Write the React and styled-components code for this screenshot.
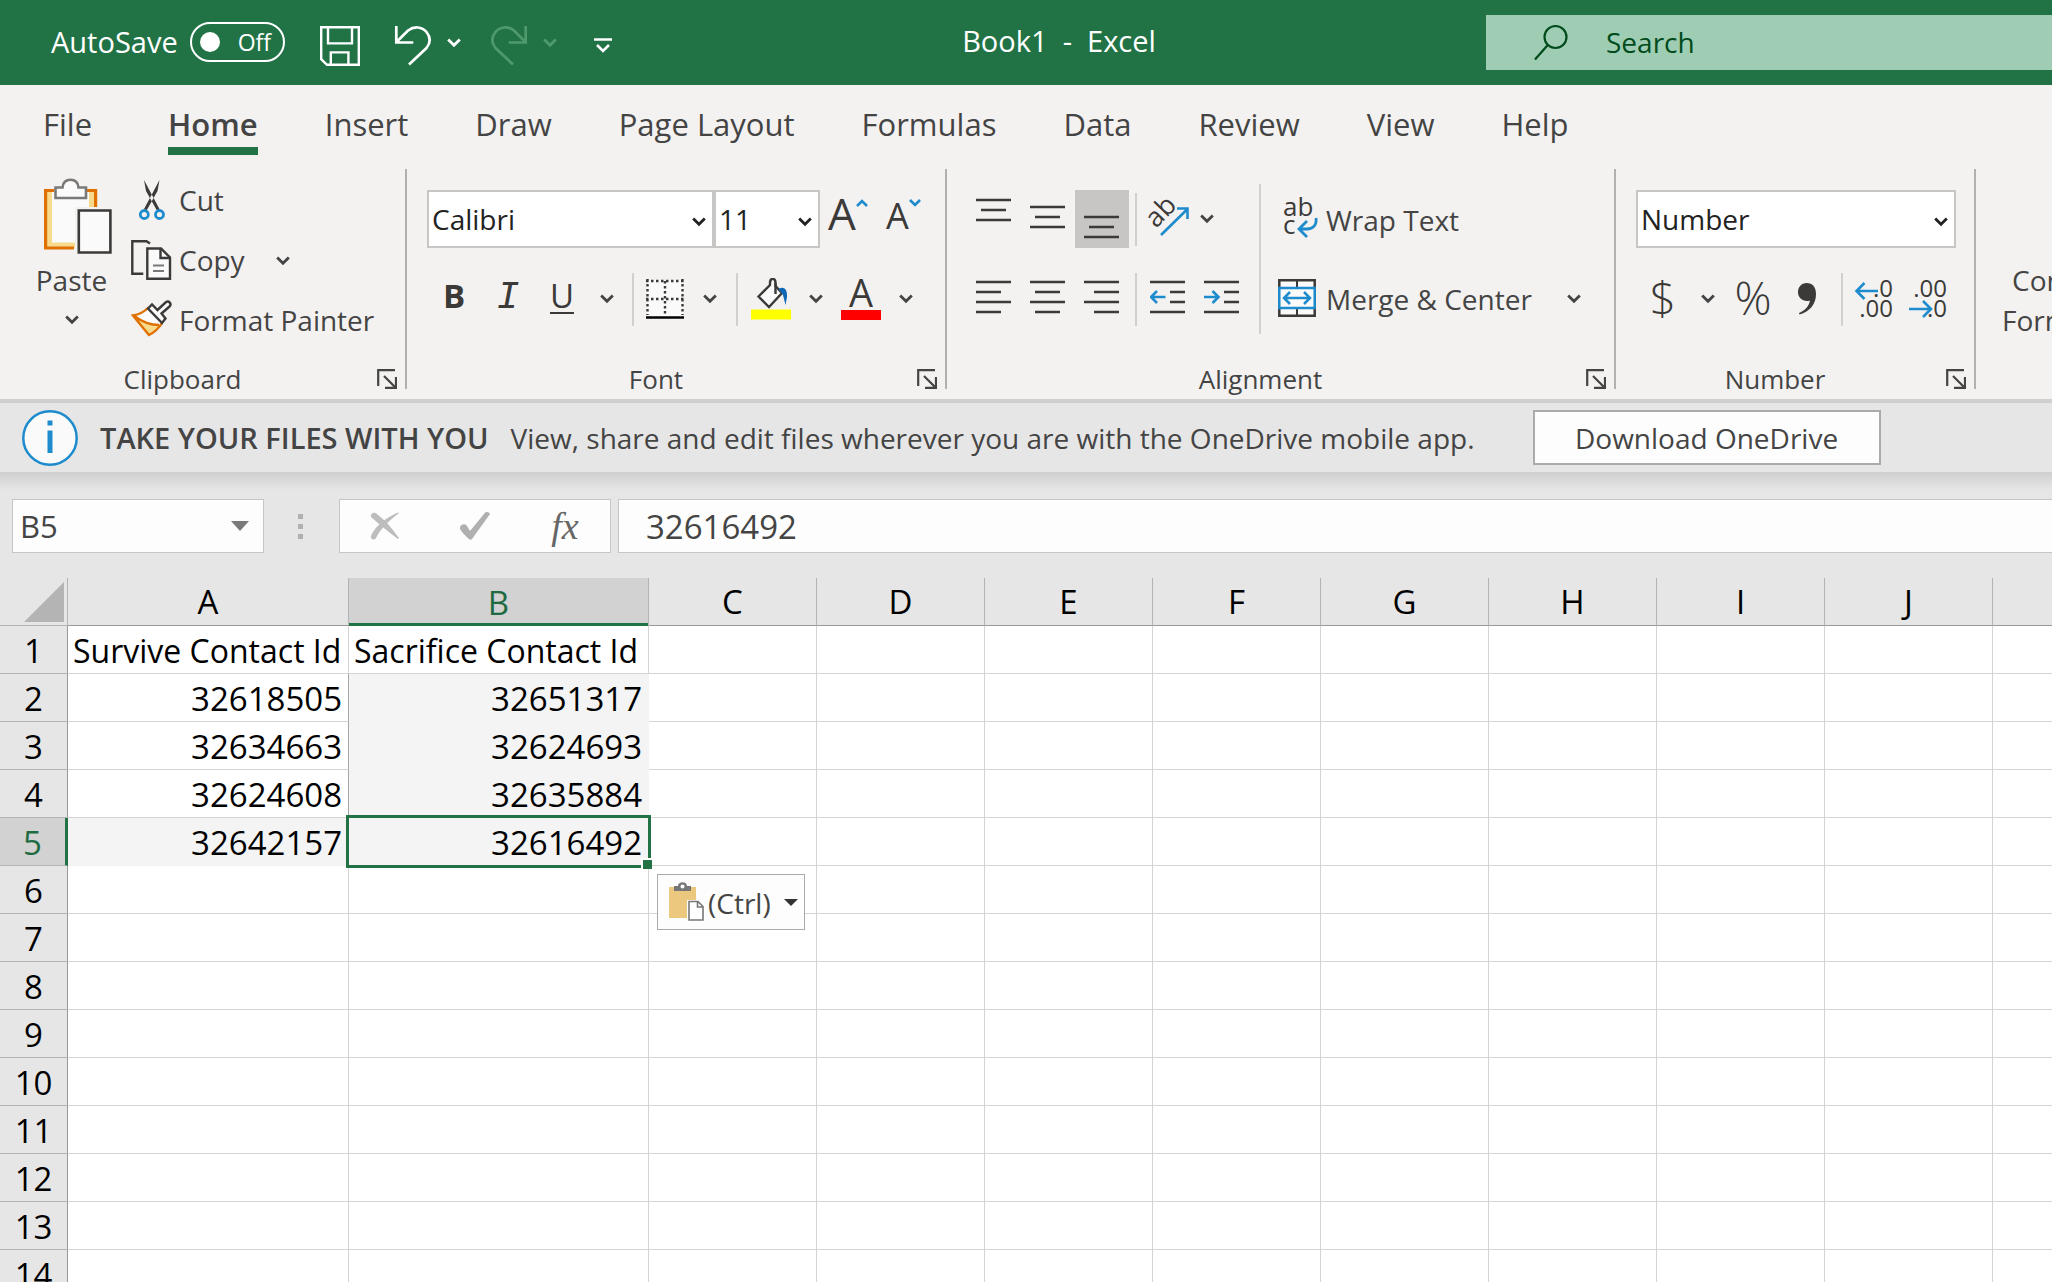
import React from "react";
import styled, { createGlobalStyle } from "styled-components";

const INK = "#3b3a39";
const BLUE = "#1e8bcd";

const TABS = [
  "File",
  "Home",
  "Insert",
  "Draw",
  "Page Layout",
  "Formulas",
  "Data",
  "Review",
  "View",
  "Help",
];

const COLUMNS = [
  { name: "A", width: 281 },
  { name: "B", width: 300 },
  { name: "C", width: 168 },
  { name: "D", width: 168 },
  { name: "E", width: 168 },
  { name: "F", width: 168 },
  { name: "G", width: 168 },
  { name: "H", width: 168 },
  { name: "I", width: 168 },
  { name: "J", width: 168 },
  { name: "K" },
];

const DATA = [
  ["Survive Contact Id", "Sacrifice Contact Id"],
  ["32618505", "32651317"],
  ["32634663", "32624693"],
  ["32624608", "32635884"],
  ["32642157", "32616492"],
];

const ROWS = Array.from({ length: 14 }, (_, i) => DATA[i] || []);

const Chevron = () => (
  <svg width="14" height="10" viewBox="0 0 14 10" fill="none">
    <path d="M1.2 1.5 7 7.3l5.8-5.8" stroke="currentColor" strokeWidth="2.8" />
  </svg>
);

const SaveIcon = () => (
  <svg width="40" height="40" viewBox="0 0 40 40" fill="none">
    <g stroke="#fff" strokeWidth="2.4">
      <path d="M1.2 1.2h37.6v37.6H7l-5.8-5.6z" />
      <path d="M8 2v15.4h24V2M10.800 38V26.400h17.600V38" />
    </g>
  </svg>
);

const UndoIcon = ({ flip }) => (
  <svg width="38" height="40" viewBox="0 0 38 40" fill="none">
    <path
      d="M2.300 0v16.500h17M2.500 16 14 4.500C20 0 28 .5 32.500 6c4 5 4 11 0 16L15 38.500"
      stroke="currentColor"
      strokeWidth="2.700"
      transform={flip ? "matrix(-1 0 0 1 38 0)" : undefined}
    />
  </svg>
);

const CustomizeIcon = () => (
  <svg width="18" height="16" viewBox="0 0 18 16" fill="none">
    <path d="M0 1.500h18M3 7l6 6 6-6" stroke="#fff" strokeWidth="2.600" />
  </svg>
);

const SearchIcon = () => (
  <svg width="34" height="38" viewBox="0 0 34 38" fill="none">
    <g stroke="#004b1c" strokeWidth="2.200">
      <circle cx="21.500" cy="13" r="11" />
      <path d="M13.800 21 1 35.500" />
    </g>
  </svg>
);

const PasteIcon = () => (
  <svg width="70" height="76" viewBox="0 0 70 76" fill="none">
    <path d="M1.500 12.500h51v58h-51z" fill="#fafafa" />
    <path d="M5.500 14v53H31M47.500 14v15" stroke="#f8da8c" strokeWidth="5" />
    <path d="M10 12.500H1.600V70H30M43 12.500h8.600V29" stroke="#e07000" strokeWidth="3.200" />
    <path
      d="M11.500 9.500h7C19 4.500 22 1.800 26.500 1.800S34 4.500 34.500 9.500h7.500v10.500H11.500z"
      fill="#fafafa"
      stroke="#7a7978"
      strokeWidth="2.600"
    />
    <path d="M31 29h38v47H31z" fill="#f3f2f1" />
    <path d="M34.800 32.500h31.600v42H34.800z" fill="#fafafa" stroke={INK} strokeWidth="2.600" />
  </svg>
);

const CutIcon = () => (
  <svg width="40" height="40" viewBox="0 0 40 40" fill="none">
    <path d="M12 0 28 30l-2.500 1.500L14 11zM27.500 0l-16 30 2.500 1.500L25.500 11z" fill={INK} />
    <circle cx="12.300" cy="34.500" r="4" stroke={BLUE} strokeWidth="2.800" />
    <circle cx="27.500" cy="34.500" r="4" stroke={BLUE} strokeWidth="2.800" />
  </svg>
);

const CopyIcon = () => (
  <svg width="42" height="40" viewBox="0 0 42 40" fill="none">
    <path d="M19 3.500 15.500 1.200H1.300v32.500h11" stroke={INK} strokeWidth="2.400" />
    <path d="M16.300 8.500H30l9 9v21.300H16.300z" fill="#fafafa" stroke={INK} strokeWidth="2.400" />
    <path d="M29.500 8.500v9.500H39" stroke={INK} strokeWidth="2.400" />
    <path d="M22 25.500h11M22 31h11" stroke="#7a7978" strokeWidth="2.200" />
  </svg>
);

const PainterIcon = () => (
  <svg width="42" height="40" viewBox="0 2 42 40" fill="none">
    <path d="M2 17.500c7-1 12-4 15.500-8L32 24c-3 6-8 10-14 13z" fill="#fafafa" />
    <path d="M4 19.500c8 6 16 8 25 8-3 4-7 7-11 9z" fill="#f8da8c" />
    <path
      d="M17.500 9.500c-4 4-9 7-15.500 8C8 25 13 31 18 37c6-3 10-7 13-12M4 18.500c8 6 16 8.500 24 8.500"
      stroke="#e07000"
      strokeWidth="2.400"
    />
    <path
      d="m17 10.500 4-4 5.500 5.500 8-7.500c3.500-2.500 6.500 1.500 4 4L30.500 15.500l4 5L31 25z"
      fill="#fafafa"
      stroke={INK}
      strokeWidth="2.400"
    />
  </svg>
);

const LauncherIcon = () => (
  <svg width="20" height="20" viewBox="0 0 20 20" fill="none" stroke="#444" strokeWidth="2.200">
    <path d="M1.200 17V1.200H18M7 7l11 11M19 8v10.800H8" />
  </svg>
);

const GrowCaret = () => (
  <svg width="12" height="8" viewBox="0 0 12 8" fill="none">
    <path d="m1 7 5-5 5 5" stroke={BLUE} strokeWidth="2.600" />
  </svg>
);

const ShrinkCaret = () => (
  <svg width="12" height="8" viewBox="0 0 12 8" fill="none">
    <path d="m1 1 5 5 5-5" stroke={BLUE} strokeWidth="2.600" />
  </svg>
);

const BordersIcon = () => (
  <svg width="38" height="40" viewBox="0 0 38 40" fill="none">
    <path d="M1 1h36v37H1z" fill="#fafafa" />
    <path
      d="M0 2h38M1.500 0v36M36.500 0v36M19 2v34M0 20h38"
      stroke={INK}
      strokeWidth="2.400"
      strokeDasharray="2.500 2.500"
    />
    <path d="M0 38.500h38" stroke="#000" strokeWidth="2.600" />
  </svg>
);

const FillIcon = () => (
  <svg width="40" height="42" viewBox="0 0 40 42" fill="none">
    <path
      d="m7.500 18.500 11.500-11.500V5c0-5.500 5.500-5.500 5.500 0v3L31 15 18 29z"
      fill="#fafafa"
      stroke={INK}
      strokeWidth="2.400"
    />
    <path d="M24.500 5v11" stroke={INK} strokeWidth="2.400" />
    <path d="M27.500 11c6-3.500 9 1 8.500 8l-1.500 8L32 17z" fill="#0f67b5" />
    <path d="M0 31.500h40v10H0z" fill="#ff0" />
  </svg>
);

const LINE_PATHS = {
  top: "M0 8h35M5 18h25M0 28h35",
  middle: "M0 15h35M5 25h25M0 35h35",
  bottom: "M0 25h35M5 35h25M0 45h35",
  left: "M0 10h35M0 20h25M0 30h35M0 40h25",
  center: "M0 10h35M5 20h25M0 30h35M5 40h25",
  right: "M0 10h35M10 20h25M0 30h35M10 40h25",
  indent: "M0 10h35M20 20h15M20 30h15M0 40h35",
};

const LinesIcon = ({ kind, arrow }) => (
  <svg width="36" height="54" viewBox="0 0 36 54" fill="none" strokeWidth="2.600">
    <path d={LINE_PATHS[kind]} stroke={INK} />
    {arrow && <path d={arrow} stroke={BLUE} />}
  </svg>
);

const OrientationIcon = () => (
  <GlyphSvg width="44" height="44" viewBox="0 0 44 44" fill="none">
    <text
      x="10"
      y="32"
      transform="rotate(-46 10 32)"
      fontSize="27"
      fill={INK}
    >
      ab
    </text>
    <path d="M15 38 41 12.500M31 11.500h10.500V22" stroke={BLUE} strokeWidth="2.600" />
  </GlyphSvg>
);

const WrapIcon = () => (
  <GlyphSvg width="38" height="42" viewBox="0 0 38 42" fill="none">
    <text fontSize="26" fill={INK}>
      <tspan x="5" y="18">ab</tspan>
      <tspan x="5" y="36">c</tspan>
    </text>
    <path d="M38 20c1 7-3 11-9 11h-7M29 23l-8 8 8 8" stroke={BLUE} strokeWidth="2.800" />
  </GlyphSvg>
);

const MergeIcon = () => (
  <svg width="38" height="38" viewBox="0 0 38 38" fill="none">
    <path d="M1.300 1.300h35.400v35.400H1.300z" fill="#fafafa" stroke={INK} strokeWidth="2.500" />
    <path d="M19 2v7M19 29v8" stroke={INK} strokeWidth="2" />
    <path d="M1.300 9h35.400v20H1.300z" fill="#fafafa" stroke={BLUE} strokeWidth="2.500" />
    <path d="M6 19h26M12 13l-6 6 6 6M26 13l6 6-6 6" stroke={BLUE} strokeWidth="2.500" />
  </svg>
);

const CommaIcon = () => (
  <svg width="20" height="32" viewBox="0 0 20 32">
    <path
      d="M9.500 0C16 0 19 4.500 19 11c0 10-6 17.500-16.500 20.500l-.5-1.500c6-2.500 10-7 11-12.500C7 19.500 1 15.500 1 9 1 4 4.500 0 9.500 0z"
      fill={INK}
    />
  </svg>
);

const DecimalIcon = ({ top, bottom, arrow }) => (
  <GlyphSvg width="38" height="40" viewBox="0 0 38 40" fill="none">
    <text fontSize="24" fill={INK} textAnchor="end">
      <tspan x="38" y="18">{top}</tspan>
      <tspan x="38" y="38">{bottom}</tspan>
    </text>
    <path d={arrow} stroke={BLUE} strokeWidth="2.600" />
  </GlyphSvg>
);

const InfoIcon = () => (
  <svg width="56" height="56" viewBox="0 0 56 56" fill="none">
    <circle cx="28" cy="28" r="26.700" fill="#fafafa" stroke={BLUE} strokeWidth="2.500" />
    <path d="M28 10.500v5M28 20.500V43" stroke={BLUE} strokeWidth="5" />
  </svg>
);

const CancelIcon = () => (
  <svg width="30" height="28" viewBox="0 0 30 28" fill="none">
    <path d="M1 5C0 2 4-1 7 2c8 6 15 14 22 24l-1 1C20 21 10 13 1 5z" fill="#bdbdbd" />
    <path d="M29 1C20 8 11 16 6 26 4 29 0 27 1 24 5 14 17 5 28 .5z" fill="#bdbdbd" />
  </svg>
);

const EnterIcon = () => (
  <svg width="32" height="28" viewBox="0 0 32 28" fill="none">
    <path d="M1 15c1-3 5-4 7-1l3 5L25 2c2-3 5-2 6 0L13 27c-1 1-2 1-3 0C6 24 3 20 1 17z" fill="#b0b0b0" />
  </svg>
);

const DownTriangle = () => (
  <svg width="18" height="10" viewBox="0 0 18 10">
    <path d="M0 0h18L9 10z" fill="#7a7a7a" />
  </svg>
);

const PasteOptionsIcon = () => (
  <svg width="36" height="40" viewBox="0 0 36 40" fill="none">
    <path d="M0 5h27v31H0z" fill="#ecc87f" />
    <path d="M5 9V4h4c0-5 9-5 9 0h4v5z" fill="#777" />
    <circle cx="13.500" cy="4.500" r="2" fill="#fff" />
    <path d="M18 18h18v22H18z" fill="#fff" />
    <path d="M20 19.500h9l5 5V38H20zM28.500 19.500v5.500H34" stroke="#777" strokeWidth="1.600" />
  </svg>
);

const App = () => {
  const btn = (label, icon) => (
    <ToolButton aria-label={label}>{icon}</ToolButton>
  );

  return (
    <Page>
      <GlobalStyle />
      <TitleBar>
        <QuickAccess>
          <BarText>AutoSave</BarText>
          <Toggle aria-label="AutoSave off">Off</Toggle>
          <QuickButton aria-label="Save">
            <SaveIcon />
          </QuickButton>
          <QuickPair aria-label="Undo">
            <UndoIcon />
            <Chevron />
          </QuickPair>
          <QuickPair aria-label="Redo" disabled>
            <UndoIcon flip />
            <Chevron />
          </QuickPair>
          <QuickButton aria-label="Customize">
            <CustomizeIcon />
          </QuickButton>
        </QuickAccess>
        <DocumentName>Book1&nbsp; -&nbsp; Excel</DocumentName>
        <SearchBox>
          <SearchIcon />
          <input type="search" placeholder="Search" aria-label="Search" />
        </SearchBox>
      </TitleBar>

      <TabBar>
        {TABS.map((tab) => (
          <Tab key={tab} href="#" $active={tab === "Home"}>
            {tab}
          </Tab>
        ))}
      </TabBar>

      <Ribbon>
        <Group $width={407}>
          <ClipboardBody>
            <PasteButton>
              <PasteIcon />
              <span>Paste</span>
              <Chevron />
            </PasteButton>
            <ClipboardList>
              <LabelButton>
                <CutIcon />
                <span>Cut</span>
              </LabelButton>
              <LabelButton>
                <CopyIcon />
                <span>Copy</span>
                <Drop as="span">
                  <Chevron />
                </Drop>
              </LabelButton>
              <LabelButton>
                <PainterIcon />
                <span>Format Painter</span>
              </LabelButton>
            </ClipboardList>
          </ClipboardBody>
          <GroupFooter name="Clipboard" />
        </Group>

        <Group $width={540}>
          <Tools>
            <ToolRow>
              <ComboBox label="Font name" value="Calibri" width={287} />
              <ComboBox label="Font size" value="11" width={106} />
              <SizeButton aria-label="Increase font size" $size={44} $leading={46}>
                A<GrowCaret />
              </SizeButton>
              <SizeButton aria-label="Decrease font size" $size={36} $leading={52}>
                A<ShrinkCaret />
              </SizeButton>
            </ToolRow>
            <ToolRow>
              <BoldButton>B</BoldButton>
              <ItalicButton>I</ItalicButton>
              <UnderlineButton>
                <span>U</span>
              </UnderlineButton>
              <Drop aria-label="Underline options">
                <Chevron />
              </Drop>
              <Divider />
              {btn("Borders", <BordersIcon />)}
              <Drop aria-label="Border options">
                <Chevron />
              </Drop>
              <Divider $wide />
              {btn("Fill color", <FillIcon />)}
              <Drop aria-label="Fill options">
                <Chevron />
              </Drop>
              <FontColorButton aria-label="Font color">
                <span>A</span>
              </FontColorButton>
              <Drop aria-label="Font color options">
                <Chevron />
              </Drop>
            </ToolRow>
          </Tools>
          <GroupFooter name="Font" />
        </Group>

        <Group $width={669}>
          <AlignmentBody>
            <div>
              <ToolRow>
                {btn("Top align", <LinesIcon kind="top" />)}
                {btn("Middle align", <LinesIcon kind="middle" />)}
                <ToolButton aria-label="Bottom align" aria-pressed="true">
                  <LinesIcon kind="bottom" />
                </ToolButton>
                <Divider $tight />
                {btn("Orientation", <OrientationIcon />)}
                <Drop aria-label="Orientation options" $narrow>
                  <Chevron />
                </Drop>
              </ToolRow>
              <ToolRow>
                {btn("Align left", <LinesIcon kind="left" />)}
                {btn("Center", <LinesIcon kind="center" />)}
                {btn("Align right", <LinesIcon kind="right" />)}
                <Divider $tight />
                {btn(
                  "Decrease indent",
                  <LinesIcon kind="indent" arrow="M1 25h14.500M7 19l-6 6 6 6" />
                )}
                {btn(
                  "Increase indent",
                  <LinesIcon kind="indent" arrow="M0 25h14.500M8.500 19l6 6-6 6" />
                )}
              </ToolRow>
            </div>
            <WrapColumn>
              <LabelButton>
                <WrapIcon />
                <span>Wrap Text</span>
              </LabelButton>
              <LabelButton>
                <MergeIcon />
                <span>Merge &amp; Center</span>
                <Drop as="span">
                  <Chevron />
                </Drop>
              </LabelButton>
            </WrapColumn>
          </AlignmentBody>
          <GroupFooter name="Alignment" />
        </Group>

        <Group $width={360}>
          <Tools>
            <ToolRow>
              <ComboBox label="Number format" value="Number" width={320} />
            </ToolRow>
            <ToolRow>
              <GlyphButton>$</GlyphButton>
              <Drop aria-label="Currency options">
                <Chevron />
              </Drop>
              <GlyphButton>%</GlyphButton>
              {btn("Comma style", <CommaIcon />)}
              <Divider />
              {btn(
                "Increase decimal",
                <DecimalIcon top=".0" bottom=".00" arrow="M23 12H2M9.500 4 1.500 12l8 8" />
              )}
              {btn(
                "Decrease decimal",
                <DecimalIcon top=".00" bottom=".0" arrow="M0 30h21M14 22l8 8-8 8" />
              )}
            </ToolRow>
          </Tools>
          <GroupFooter name="Number" />
        </Group>

        <StylesGroup>
          <ConditionalButton>
            <span>Conditional</span>
            <span>Formatting</span>
          </ConditionalButton>
        </StylesGroup>
      </Ribbon>

      <MessageBar>
        <InfoIcon />
        <strong>TAKE YOUR FILES WITH YOU</strong>
        <p>View, share and edit files wherever you are with the OneDrive mobile app.</p>
        <DownloadButton>Download OneDrive</DownloadButton>
      </MessageBar>

      <FormulaBar>
        <NameBox>
          <input aria-label="Name box" defaultValue="B5" />
          <button aria-label="Name list">
            <DownTriangle />
          </button>
        </NameBox>
        <Dots>
          <i />
          <i />
          <i />
        </Dots>
        <FormulaActions>
          <button aria-label="Cancel">
            <CancelIcon />
          </button>
          <button aria-label="Enter">
            <EnterIcon />
          </button>
          <button aria-label="Insert function">
            <Fx>fx</Fx>
          </button>
        </FormulaActions>
        <FormulaInput aria-label="Formula" defaultValue="32616492" />
      </FormulaBar>

      <SheetArea>
        <Sheet>
          <colgroup>
            <Col $width={68} />
            {COLUMNS.map((col) => (
              <Col key={col.name} $width={col.width} />
            ))}
          </colgroup>
          <thead>
            <tr>
              <Corner>
                <svg width="40" height="40" viewBox="0 0 40 40">
                  <path d="M40 0v40H0z" fill="#b4b4b4" />
                </svg>
              </Corner>
              {COLUMNS.map((col) => (
                <ColumnHead key={col.name} scope="col" $active={col.name === "B"}>
                  {col.name}
                </ColumnHead>
              ))}
            </tr>
          </thead>
          <tbody>
            {ROWS.map((row, r) => (
              <tr key={r}>
                <RowHead scope="row" $active={r === 4}>
                  {r + 1}
                </RowHead>
                {COLUMNS.map((col, c) => {
                  const active = r === 4 && c === 1;
                  const shaded = (c === 1 && r > 0 && r < 4) || (c === 0 && r === 4);
                  return (
                    <Cell
                      key={col.name}
                      $number={r > 0}
                      $active={active}
                      $shaded={shaded}
                      $edge={c === 0 && r > 0 && r < 4}
                    >
                      {row[c]}
                      {active && (
                        <>
                          <Selection />
                          <PasteOptions>
                            <PasteOptionsIcon />
                            <span>(Ctrl)</span>
                            <svg width="14" height="7" viewBox="0 0 14 7">
                              <path d="M0 0h14L7 7z" fill="#333" />
                            </svg>
                          </PasteOptions>
                        </>
                      )}
                    </Cell>
                  );
                })}
              </tr>
            ))}
          </tbody>
        </Sheet>
      </SheetArea>
    </Page>
  );
};

const GroupFooter = ({ name }) => (
  <Footer>
    <span>{name}</span>
    <button aria-label={`${name} settings`}>
      <LauncherIcon />
    </button>
  </Footer>
);

const ComboBox = ({ label, value, width }) => (
  <Combo $width={width}>
    <select aria-label={label} defaultValue={value}>
      <option>{value}</option>
    </select>
    <Chevron />
  </Combo>
);

const GlobalStyle = createGlobalStyle`
  *, *::before, *::after {
    box-sizing: border-box;
  }

  body {
    margin: 0;
    font-family: "Open Sans", "Noto Sans", sans-serif;
    color: #444;
    background: #fff;
  }

  button, input, select {
    font: inherit;
    color: inherit;
    border: 0;
    padding: 0;
    margin: 0;
    background: none;
    border-radius: 0;
    outline: none;
  }

  svg {
    display: block;
    flex: none;
  }
`;

const Page = styled.div`
  height: 100vh;
  display: flex;
  flex-direction: column;
  overflow: hidden;
  font-size: 28px;
`;

// Icons with letters in them, which may reach past the icon's box
const GlyphSvg = styled.svg`
  overflow: visible;
  font-family: "Open Sans", sans-serif;
`;

const TitleBar = styled.header`
  flex: none;
  height: 85px;
  display: grid;
  grid-template-columns: 640px 1fr 566px;
  align-items: center;
  background: #217346;
  color: #fff;
`;

const QuickAccess = styled.div`
  display: flex;
  align-items: center;
  padding-left: 51px;
`;

const BarText = styled.span`
  padding-bottom: 2px;
  font-size: 29px;
`;

const Toggle = styled.button`
  display: flex;
  align-items: center;
  gap: 18px;
  width: 95px;
  height: 40px;
  margin: 0 35px 2px 12px;
  padding-left: 8px;
  border: 2px solid #fff;
  border-radius: 20px;
  font-size: 23px;

  &::before {
    content: "";
    width: 20px;
    height: 20px;
    border-radius: 50%;
    background: #fff;
  }
`;

const QuickButton = styled.button`
  margin-top: 6px;
`;

const QuickPair = styled.button`
  display: flex;
  align-items: center;
  gap: 15px;
  margin: 6px 0 0 34px;
  color: #fff;

  & + & {
    margin-left: 29px;
  }

  &:disabled {
    color: #4f9a6c;
  }

  svg:last-child {
    margin-bottom: 6px;
  }

  & + ${QuickButton} {
    margin-left: 37px;
  }
`;

const DocumentName = styled(BarText)`
  justify-self: center;
  padding: 0 8px 4px 0;
`;

const SearchBox = styled.label`
  height: 55px;
  display: flex;
  align-items: center;
  gap: 38px;
  padding-left: 48px;
  background: #9fcdb3;

  input {
    flex: 1;
    min-width: 0;
    padding-bottom: 2px;
    color: #004b1c;
  }

  input::placeholder {
    color: #004b1c;
    opacity: 1;
  }
`;

const TabBar = styled.nav`
  flex: none;
  height: 75px;
  display: flex;
  gap: 67px;
  padding: 15px 0 5px 43px;
  background: #f3f2f1;
`;

const Tab = styled.a`
  height: 55px;
  line-height: 49px;
  font-size: 31px;
  font-weight: ${(p) => (p.$active ? 600 : 400)};
  color: #444;
  text-decoration: none;
  white-space: nowrap;
  border-bottom: 8px solid ${(p) => (p.$active ? "#217346" : "transparent")};

  &:first-child {
    padding-right: 9px;
  }
`;

const Ribbon = styled.section`
  flex: none;
  height: 243px;
  display: flex;
  overflow: hidden;
  background: #f3f2f1;
  border-bottom: 4px solid #cfcfcf;
`;

const Group = styled.div`
  position: relative;
  flex: none;
  width: ${(p) => p.$width}px;
  display: flex;
  flex-direction: column;
  justify-content: space-between;

  &::after {
    content: "";
    position: absolute;
    right: 0;
    top: 9px;
    bottom: 10px;
    width: 2px;
    background: #b1b0af;
  }
`;

const Footer = styled.div`
  display: grid;
  grid-template-columns: 1fr 42px;
  align-items: center;
  height: 40px;
  font-size: 26px;
  text-align: center;

  button {
    display: flex;
    justify-content: center;
    padding-left: 2px;
  }
`;

const ClipboardBody = styled.div`
  display: flex;
  height: 190px;
  padding-top: 10px;
`;

const PasteButton = styled.button`
  display: flex;
  flex-direction: column;
  align-items: center;
  width: 87px;
  margin-left: 28px;
  padding-top: 8px;

  span {
    margin: 6px 0 15px;
    line-height: 40px;
  }

  svg:first-child {
    margin-left: 14px;
  }
`;

const ClipboardList = styled.div`
  padding-left: 16px;

  svg:first-child {
    width: 42px;
  }
`;

const LabelButton = styled.button`
  display: flex;
  align-items: center;
  gap: 6px;
  height: 60px;
  white-space: nowrap;
`;

const Drop = styled.button`
  display: flex;
  justify-content: center;
  width: ${(p) => (p.$narrow ? 24 : 36)}px;

  ${LabelButton} & {
    margin-left: 14px;
    padding-top: 2px;
  }
`;

const Tools = styled.div`
  padding: 19px 0 0 20px;
`;

const ToolRow = styled.div`
  display: flex;
  align-items: center;
  height: 80px;
`;

const ToolButton = styled.button`
  display: flex;
  align-items: center;
  justify-content: center;
  width: 54px;
  height: 58px;

  &[aria-pressed="true"] {
    background: #c8c6c4;
  }
`;

const BoldButton = styled(ToolButton)`
  padding-bottom: 8px;
  font-size: 33px;
  font-weight: 700;
  color: ${INK};
`;

const ItalicButton = styled(ToolButton)`
  padding-bottom: 4px;
  font-family: "Liberation Mono", monospace;
  font-size: 38px;
  font-style: italic;
  color: ${INK};
`;

const UnderlineButton = styled(ToolButton)`
  padding-bottom: 4px;
  font-size: 33px;
  color: ${INK};

  span {
    line-height: 32px;
    border-bottom: 2px solid ${INK};
  }
`;

const GlyphButton = styled(ToolButton)`
  padding-bottom: 4px;
  font-size: 46px;
  font-weight: 300;
  color: ${INK};
`;

const FontColorButton = styled(ToolButton)`
  span {
    width: 40px;
    height: 42px;
    line-height: 28px;
    font-size: 38px;
    color: ${INK};
    border-bottom: 10px solid #f00;
  }
`;

const SizeButton = styled.button`
  display: flex;
  align-items: flex-start;
  flex: none;
  width: 58px;
  height: 58px;
  padding-left: 8px;
  font-size: ${(p) => p.$size}px;
  line-height: ${(p) => p.$leading}px;
  color: ${INK};

  svg {
    margin-top: 9px;
  }
`;

const Divider = styled.span`
  width: 2px;
  height: 53px;
  margin: ${(p) => (p.$wide ? "0 6px 0 8px" : p.$tight ? "0 4px 0 6px" : "0 4px 0 7px")};
  background: #d2d0ce;
`;

const Combo = styled.div`
  position: relative;
  flex: none;
  width: ${(p) => p.$width}px;
  height: 58px;
  background: #fff;
  border: 2px solid #c8c6c4;

  select {
    appearance: none;
    width: 100%;
    height: 100%;
    padding-left: 3px;
    color: #222;
  }

  svg {
    position: absolute;
    right: 6px;
    top: 25px;
    color: #222;
    pointer-events: none;
  }
`;

const AlignmentBody = styled.div`
  display: grid;
  grid-template-columns: 292px 1fr;
  padding: 19px 0 0 20px;
`;

const WrapColumn = styled.div`
  height: 150px;
  margin-top: 5px;
  padding-left: 17px;
  border-left: 2px solid #d2d0ce;

  ${LabelButton} {
    height: 70px;
    gap: 10px;
  }

  ${LabelButton} > span {
    padding-top: 2px;
  }

  ${LabelButton} + ${LabelButton} {
    height: 88px;
  }
`;

const StylesGroup = styled.div`
  flex: 1;
  min-width: 0;
  overflow: hidden;
`;

const ConditionalButton = styled.button`
  display: flex;
  flex-direction: column;
  align-items: flex-start;
  line-height: 40px;
  padding: 100px 0 0 26px;

  span:first-child {
    padding-left: 10px;
  }
`;

const MessageBar = styled.section`
  flex: none;
  height: 69px;
  display: flex;
  align-items: center;
  padding-left: 22px;
  background: #e6e6e6;
  white-space: nowrap;

  strong {
    margin: 0 22px;
    font-size: 29px;
    font-weight: 600;
  }

  p {
    margin: 0;
  }
`;

const DownloadButton = styled.button`
  height: 55px;
  width: 348px;
  margin-left: 58px;
  background: #fdfdfd;
  border: 2px solid #ababab;
`;

const FormulaBar = styled.div`
  flex: none;
  height: 106px;
  display: flex;
  align-items: center;
  padding: 2px 0 0 12px;
  background: linear-gradient(#cfcfcf, #e6e6e6 18px);
  font-size: 31px;
`;

const NameBox = styled.div`
  display: flex;
  width: 252px;
  height: 54px;
  background: #fdfdfd;
  border: 1px solid #c6c6c6;

  input {
    width: 204px;
    padding-left: 7px;
  }

  button {
    display: flex;
    align-items: center;
    justify-content: center;
    flex: 1;
  }
`;

const Dots = styled.div`
  display: grid;
  gap: 5px;
  margin: 0 36px 0 34px;

  i {
    width: 5px;
    height: 5px;
    background: #b0b0b0;
  }
`;

const FormulaActions = styled.div`
  display: grid;
  grid-template-columns: repeat(3, 1fr);
  width: 272px;
  height: 54px;
  background: #fdfdfd;
  border: 1px solid #c6c6c6;

  button {
    display: flex;
    align-items: center;
    justify-content: center;
  }
`;

const Fx = styled.span`
  font-family: "Liberation Serif", serif;
  font-size: 38px;
  line-height: 40px;
  font-style: italic;
  color: #666;
`;

const FormulaInput = styled.input`
  flex: 1;
  min-width: 0;
  height: 54px;
  margin-left: 7px;
  padding-left: 27px;
  font-size: 33px;
  background: #fdfdfd;
  border: 1px solid #c6c6c6;
  border-right: 0;
`;

const SheetArea = styled.main`
  flex: 1;
  min-height: 0;
  overflow: hidden;
`;

const Sheet = styled.table`
  width: 100%;
  min-width: 2161px;
  table-layout: fixed;
  border-collapse: separate;
  border-spacing: 0;
  font-size: 33px;
  line-height: 44px;
  color: #000;

  tr {
    height: 48px;
  }
`;

const Col = styled.col`
  width: ${(p) => (p.$width ? `${p.$width}px` : "auto")};
`;

const Corner = styled.td`
  padding: 0 3px 3px 24px;
  height: 48px;
  vertical-align: bottom;
  background: #e6e6e6;
  border-right: 1px solid #b4b4b4;
  border-bottom: 1px solid #b4b4b4;
`;

const ColumnHead = styled.th`
  height: 48px;
  padding: 1px 0 0;
  font-weight: 400;
  color: ${(p) => (p.$active ? "#1e6b41" : "#000")};
  background: ${(p) =>
    p.$active
      ? "linear-gradient(#217346, #217346) bottom / 100% 3px no-repeat #d2d2d2"
      : "#e6e6e6"};
  border-bottom: ${(p) => (p.$active ? "0" : "1px solid #999")};
  border-right: 1px solid #b4b4b4;
`;

const RowHead = styled.th`
  height: 48px;
  padding: 2px 0 0;
  font-weight: 400;
  color: ${(p) => (p.$active ? "#1e6b41" : "#000")};
  background: ${(p) => (p.$active ? "#d2d2d2" : "#e6e6e6")};
  border-bottom: 1px solid #b4b4b4;
  border-right: ${(p) => (p.$active ? "3px solid #217346" : "1px solid #999")};
`;

const Cell = styled.td`
  position: ${(p) => (p.$active ? "relative" : "static")};
  height: 48px;
  padding: 2px 6px 0 5px;
  font-size: ${(p) => (p.$number ? 33 : 32)}px;
  white-space: nowrap;
  text-align: ${(p) => (p.$number ? "right" : "left")};
  background: ${(p) => (p.$shaded || p.$active ? "#f4f4f4" : "#fff")};
  border-bottom: 1px solid ${(p) => (p.$shaded ? "#f4f4f4" : "#d4d4d4")};
  border-right: 1px solid
    ${(p) => (p.$edge ? "#a6a6a6" : p.$shaded ? "#f4f4f4" : "#d4d4d4")};
`;

const Selection = styled.div`
  position: absolute;
  z-index: 1;
  inset: -3px;
  border: 3px solid #217346;
  pointer-events: none;

  &::after {
    content: "";
    position: absolute;
    right: -4px;
    bottom: -4px;
    width: 11px;
    height: 11px;
    background: #217346;
    border: solid #fff;
    border-width: 2px 0 0 2px;
  }
`;

const PasteOptions = styled.button`
  position: absolute;
  z-index: 1;
  left: calc(100% + 9px);
  top: calc(100% + 9px);
  display: flex;
  align-items: center;
  gap: 3px;
  width: 148px;
  height: 56px;
  padding-left: 11px;
  font-size: 28px;
  color: #444;
  background: #fdfdfd;
  border: 1px solid #ababab;

  span {
    padding-top: 2px;
  }

  svg:last-child {
    margin-left: 10px;
  }
`;

export default App;
